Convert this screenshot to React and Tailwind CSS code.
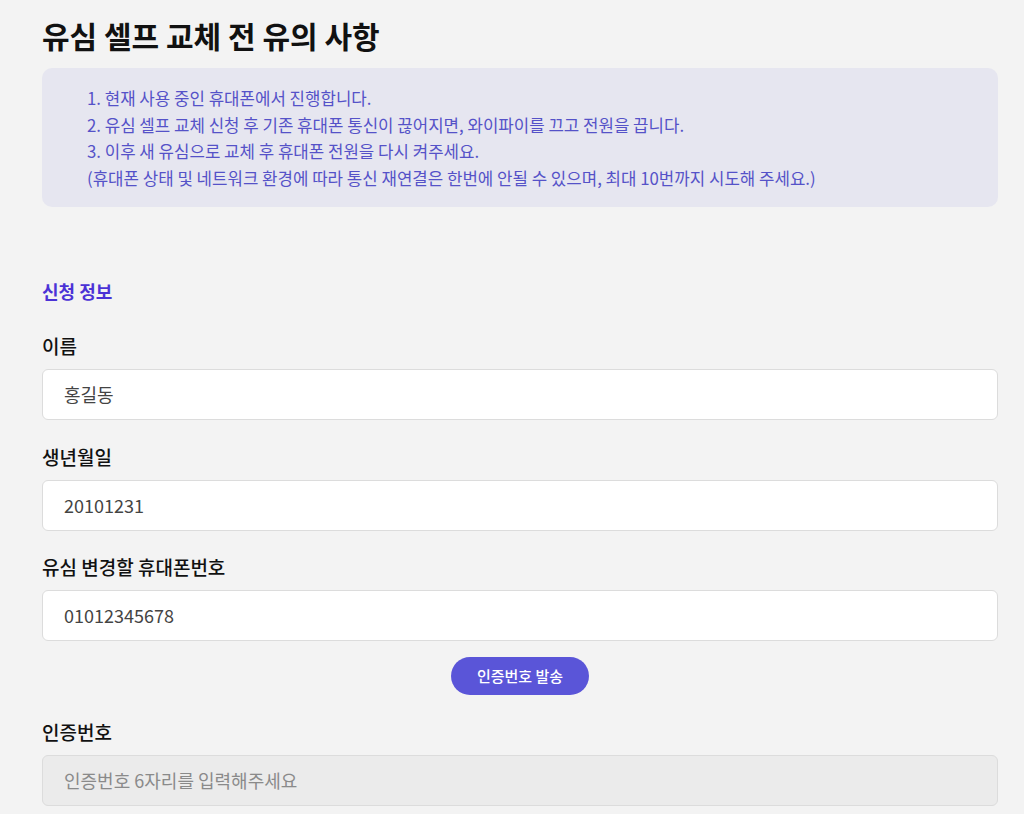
export default function App() {
  const font = { fontFamily: '"Noto Sans CJK KR", "Noto Sans", sans-serif' };
  const Field = ({ label, value, disabled, mt }) => (
    <div className={mt}>
      <div className="text-[19px] font-medium text-[#111] leading-[24px] mb-[11px]">{label}</div>
      <div className={`h-[51px] rounded-[6px] border border-[#dcdcdc] flex items-center px-[21px] text-[18px] ${disabled ? "bg-[#ebebeb] text-[#8a8a8a]" : "bg-white text-[#444]"}`}>{value}</div>
    </div>
  );
  return (
    <div style={font} className="min-h-[814px] bg-[#f3f3f3] px-[42px] pt-[14px] w-[1024px] overflow-hidden">
      <h1 className="text-[30px] font-bold text-[#111] leading-[42px]">유심 셀프 교체 전 유의 사항</h1>
      <div className="mt-[12px] w-[956px] h-[139px] rounded-[10px] bg-[#e6e6f0] pl-[45px] pt-[17px] text-[16.8px] leading-[26.5px] text-[#5552c8]">
        <div>1. 현재 사용 중인 휴대폰에서 진행합니다.</div>
        <div>2. 유심 셀프 교체 신청 후 기존 휴대폰 통신이 끊어지면, 와이파이를 끄고 전원을 끕니다.</div>
        <div>3. 이후 새 유심으로 교체 후 휴대폰 전원을 다시 켜주세요.</div>
        <div>(휴대폰 상태 및 네트워크 환경에 따라 통신 재연결은 한번에 안될 수 있으며, 최대 10번까지 시도해 주세요.)</div>
      </div>
      <div className="mt-[72px] text-[18px] font-bold text-[#4b32d6] leading-[24px]">신청 정보</div>
      <div className="w-[956px]">
        <Field mt="mt-[31px]" label="이름" value="홍길동" />
        <Field mt="mt-[25px]" label="생년월일" value="20101231" />
        <Field mt="mt-[24px]" label="유심 변경할 휴대폰번호" value="01012345678" />
        <div className="flex justify-center mt-[16px]">
          <button className="h-[38px] w-[138px] rounded-full bg-[#5a55d8] text-white text-[15px] font-medium">인증번호 발송</button>
        </div>
        <Field mt="mt-[25px]" label="인증번호" value="인증번호 6자리를 입력해주세요" disabled />
      </div>
    </div>
  );
}
